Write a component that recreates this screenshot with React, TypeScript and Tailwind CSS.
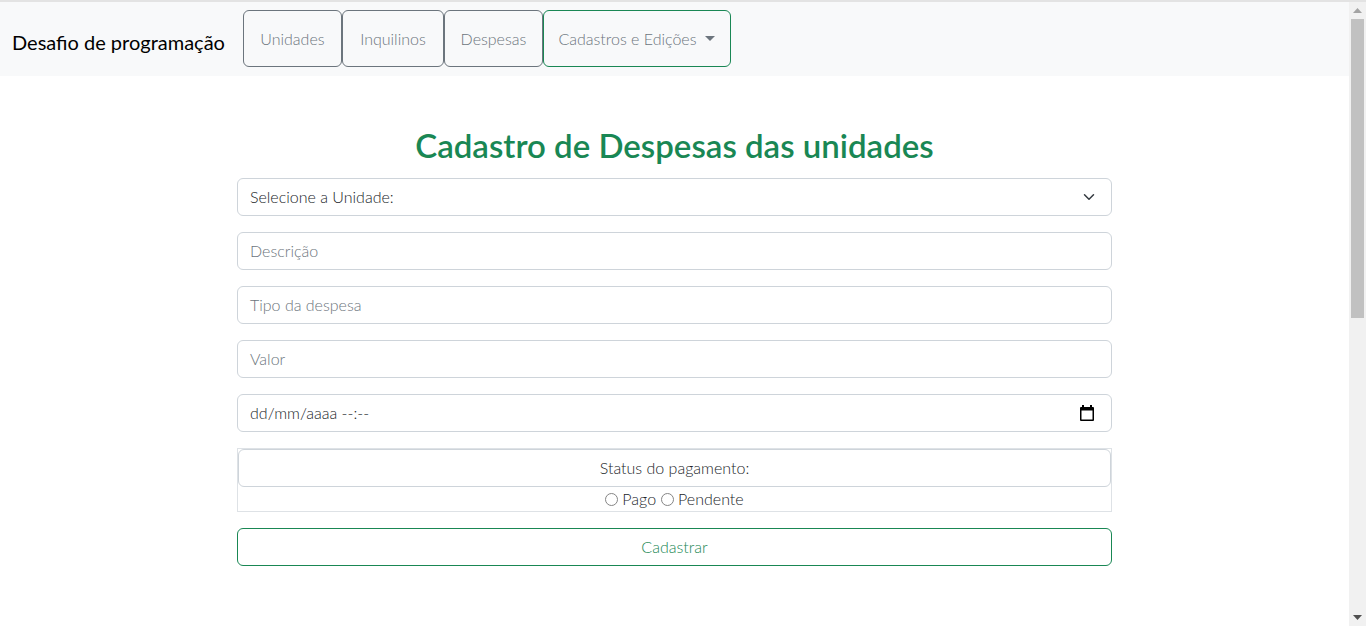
import React from "react";

const font = { fontFamily: "Lato, 'Noto Sans', sans-serif" };

function Chevron() {
  return (
    <svg width="16" height="12" viewBox="0 0 16 16" className="shrink-0">
      <path d="m2 5 6 6 6-6" fill="none" stroke="#343a40" strokeWidth="2" strokeLinecap="round" strokeLinejoin="round" />
    </svg>
  );
}

function Calendar() {
  return (
    <svg width="16" height="17" viewBox="0 0 16 17" className="shrink-0">
      <rect x="3" y="0" width="2" height="3" fill="#000" />
      <rect x="11" y="0" width="2" height="3" fill="#000" />
      <rect x="1" y="2" width="14" height="14" rx="1" fill="#000" />
      <rect x="2.5" y="5.5" width="11" height="9" fill="#fff" />
    </svg>
  );
}

function Field({ children, className = "" }: { children: React.ReactNode; className?: string }) {
  return (
    <div className={`h-[38px] border border-[#ced4da] rounded-[6px] px-3 flex items-center text-base ${className}`}>
      {children}
    </div>
  );
}

function Radio({ label }: { label: string }) {
  return (
    <span className="inline-flex items-center gap-[4px]">
      <span className="w-[13px] h-[13px] rounded-full border border-[#858585] bg-white inline-block" />
      <span>{label}</span>
    </span>
  );
}

function Scrollbar() {
  return (
    <div className="w-[17px] shrink-0 bg-[#f1f1f1] flex flex-col items-center">
      <div className="h-[17px] w-full flex items-center justify-center">
        <svg width="9" height="5" viewBox="0 0 9 5"><path d="M0 5 L4.5 0 L9 5 Z" fill="#a3a3a3" /></svg>
      </div>
      <div className="w-[13px] h-[299px] bg-[#c1c1c1]" />
      <div className="flex-1" />
      <div className="h-[17px] w-full flex items-center justify-center">
        <svg width="9" height="5" viewBox="0 0 9 5"><path d="M0 0 L9 0 L4.5 5 Z" fill="#505050" /></svg>
      </div>
    </div>
  );
}

export default function App() {
  const navBtn = "h-[57px] border border-[#6c757d] rounded-[6px] px-4 text-[#6c757d] text-base font-light flex items-center justify-center whitespace-nowrap bg-transparent";
  return (
    <div className="h-[626px] flex flex-col bg-white text-[#212529] overflow-hidden" style={font}>
      <div className="h-[2px] bg-[#e3e3e3] shrink-0" />
      <div className="flex-1 flex min-h-0">
        <div className="flex-1 min-w-0">
          <nav className="h-[74px] bg-[#f8f9fa] flex items-start pt-[8px] pl-3">
            <span className="text-[20px] text-black mr-[18px] self-center -mt-[2px] whitespace-nowrap">Desafio de programação</span>
            <div className="flex">
              <button className={`${navBtn} w-[99px]`}>Unidades</button>
              <button className={`${navBtn} w-[102px]`}>Inquilinos</button>
              <button className={`${navBtn} w-[99px]`}>Despesas</button>
              <button className={`${navBtn} w-[188px] !border-[#198754] gap-[9px]`}>
                Cadastros e Edições
                <span className="inline-block w-0 h-0 border-l-[5px] border-r-[5px] border-t-[5px] border-l-transparent border-r-transparent border-t-[#6c757d]" />
              </button>
            </div>
          </nav>
          <main className="w-[875px] ml-[237px] pt-[50px]">
            <h2 className="h-[38px] leading-[38px] text-center text-[33px] font-semibold text-[#198754] mb-[14px] whitespace-nowrap">
              Cadastro de Despesas das unidades
            </h2>
            <div className="flex flex-col gap-4 font-light">
              <Field className="justify-between pr-[14px]">
                <span className="text-[#212529]">Selecione a Unidade:</span>
                <Chevron />
              </Field>
              <Field><span className="text-[#6c757d]">Descrição</span></Field>
              <Field><span className="text-[#6c757d]">Tipo da despesa</span></Field>
              <Field><span className="text-[#6c757d]">Valor</span></Field>
              <Field className="justify-between pr-[16px]">
                <span className="text-[#212529]">dd/mm/aaaa --:--</span>
                <Calendar />
              </Field>
              <div className="border border-[#dee2e6]">
                <div className="h-[38px] border border-[#ced4da] rounded-[6px] flex items-center justify-center">
                  Status do pagamento:
                </div>
                <div className="h-[24px] flex items-center justify-center gap-[5px]">
                  <Radio label="Pago" />
                  <Radio label="Pendente" />
                </div>
              </div>
              <button className="h-[38px] border border-[#198754] rounded-[6px] text-[#198754] text-base">
                Cadastrar
              </button>
            </div>
          </main>
        </div>
        <Scrollbar />
      </div>
    </div>
  );
}
